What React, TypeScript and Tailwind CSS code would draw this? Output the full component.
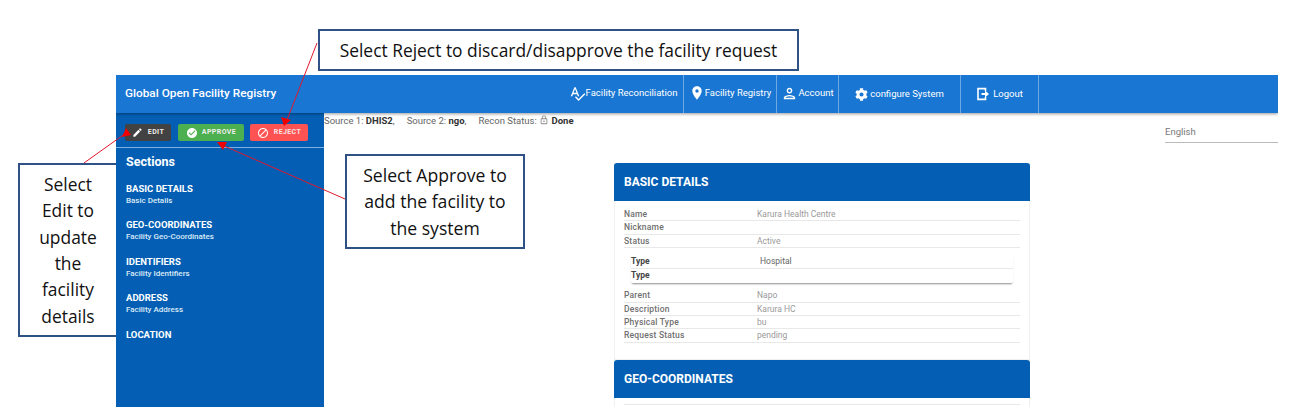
import React from "react";
import {
  MdBlock,
  MdCheckCircle,
  MdEdit,
  MdLockOutline,
  MdOutlinePerson,
  MdRoom,
  MdSpellcheck,
} from "react-icons/md";
import { FaCog } from "react-icons/fa";

const roboto = "font-['Roboto',sans-serif]";

const LogoutIcon = () => (
  <svg viewBox="0 0 14 14" className="h-[14px] w-[14px]" fill="none">
    <path d="M9.5 4V1.6H2V12.4H9.5V10" stroke="currentColor" strokeWidth="1.6" />
    <path d="M5.5 6H9V3.6L13 7L9 10.4V8H5.5Z" fill="currentColor" />
  </svg>
);

const navItems = [
  { label: "Facility Reconciliation", icon: <MdSpellcheck className="text-[17px]" />, width: "w-[121px]", extra: "pb-[2px]" },
  { label: "Facility Registry", icon: <MdRoom className="text-[16px]" />, width: "w-[93px]", extra: "pb-[2px]" },
  { label: "Account", icon: <MdOutlinePerson className="text-[17px]" />, width: "w-[62px]", extra: "pb-[2px]" },
  { label: "configure System", icon: <FaCog className="text-[13px]" />, width: "w-[122px]", extra: "gap-[2px]" },
  { label: "Logout", icon: <LogoutIcon />, width: "w-[78px]", extra: "gap-[3px]" },
];

const sections = [
  { title: "BASIC DETAILS", sub: "Basic Details" },
  { title: "GEO-COORDINATES", sub: "Facility Geo-Coordinates" },
  { title: "IDENTIFIERS", sub: "Facility Identifiers" },
  { title: "ADDRESS", sub: "Facility Address" },
  { title: "LOCATION", sub: "" },
];

const Row = ({ label, value }: { label: string; value?: string }) => (
  <div className="flex h-[13.4px] items-center border-b border-[#e8e8e8] text-[8.5px] leading-none">
    <span className="w-[133px] font-medium tracking-[0.2px] text-[#707070]">{label}</span>
    <span className="text-[#9a9a9a]">{value}</span>
  </div>
);

const Callout = ({ className, children }: { className: string; children: React.ReactNode }) => (
  <div
    className={`absolute flex items-center justify-center border-2 border-[#2f5286] bg-white text-center font-['Open_Sans',sans-serif] text-[#111] ${className}`}
  >
    {children}
  </div>
);

export default function App() {
  return (
    <div className={`relative h-[419px] w-[1308px] overflow-hidden bg-white pl-[116px] pt-[75px] ${roboto}`}>
      <div className="flex h-[332px] w-[1162px] flex-col overflow-hidden">
        <header className="z-10 flex h-[38px] shrink-0 items-center bg-[#1976d2] pl-[9px] text-white shadow-[0_1px_3px_rgba(0,0,0,0.4)]">
          <span className="w-[151px] whitespace-nowrap text-[11.8px] font-medium">Global Open Facility Registry</span>
          <nav className="ml-[287px] flex h-full">
            {navItems.map((item) => (
              <div
                key={item.label}
                className={`flex h-full items-center justify-center border-r border-[#6ea9e4] text-[9.5px] ${item.width} ${item.extra}`}
              >
                {item.icon}
                <span>{item.label}</span>
              </div>
            ))}
          </nav>
        </header>

        <div className="flex min-h-0 flex-1">
          <aside className="w-[208px] shrink-0 bg-[#045fb4] text-white">
            <div className="flex h-[35px] items-start border-b border-[#7fb0de] pl-[9px] pt-[11px]">
              <button className="flex h-[17px] w-[46px] items-center justify-center gap-[5px] rounded-[2px] bg-[#424242] text-[7px] font-bold tracking-[0.4px] text-[#eee]">
                <MdEdit className="text-[11px] text-white" />
                EDIT
              </button>
              <button className="ml-[7px] flex h-[17px] w-[66px] items-center justify-center gap-[4px] rounded-[2px] bg-[#4caf50] text-[7px] font-bold tracking-[0.4px] text-[#eee]">
                <MdCheckCircle className="text-[12px] text-white" />
                APPROVE
              </button>
              <button className="ml-[6px] flex h-[17px] w-[58px] items-center justify-center gap-[5px] rounded-[2px] bg-[#ff5252] text-[7px] font-bold tracking-[0.4px] text-[#f4e4e4]">
                <MdBlock className="text-[12px] text-white" />
                REJECT
              </button>
            </div>
            <div className="pl-[10px] pt-[6px]">
              <h3 className="text-[12.5px] font-bold leading-[16px]">Sections</h3>
              <ul className="mt-[13px] flex flex-col gap-[13px]">
                {sections.map((s) => (
                  <li key={s.title} className="h-[23.4px]">
                    <div className="text-[9.5px] font-bold leading-[12px]">{s.title}</div>
                    <div className="text-[8px] font-medium leading-[11px] text-[#dcebf8]">{s.sub}</div>
                  </li>
                ))}
              </ul>
            </div>
          </aside>

          <main className="relative min-w-0 flex-1">
            <div className="flex items-start justify-between">
              <p className="pt-[2px] text-[9.5px] leading-[11px] text-[#666]">
                Source 1: <b className="font-bold text-[#333]">DHIS2</b>,<span className="ml-[12px]">Source 2:</span>{" "}
                <b className="font-bold text-[#333]">ngo</b>,<span className="ml-[12px]">Recon Status:</span>{" "}
                <MdLockOutline className="inline align-[-1px] text-[10px] text-[#888]" />{" "}
                <b className="font-bold text-[#333]">Done</b>
              </p>
              <div className="mt-[11px] h-[19px] w-[113px] border-b border-[#bbb] text-[9.5px] leading-[16px] text-[#777]">
                English
              </div>
            </div>

            <div className="ml-[290px] mt-[20px] w-[416px]">
              <section className="border border-t-0 border-[#f0f0f0] pb-[16px]">
                <h2 className="-mx-[1px] flex h-[38px] items-center rounded-t-[3px] bg-[#045fb4] pl-[10px] text-[12px] font-bold text-white">
                  BASIC DETAILS
                </h2>
                <div className="px-[9px] pt-[7px]">
                  <Row label="Name" value="Karura Health Centre" />
                  <Row label="Nickname" />
                  <Row label="Status" value="Active" />
                  <div className="mx-[7px] mb-[6px] mt-[7px] rounded-b-[2px] pb-[1px] shadow-[0_2px_2px_-1px_rgba(0,0,0,0.45)]">
                    <div className="flex h-[14px] items-center border-b border-[#e8e8e8] text-[8.5px] leading-none">
                      <span className="w-[129px] font-bold text-[#444]">Type</span>
                      <span className="text-[#666]">Hospital</span>
                    </div>
                    <div className="flex h-[13px] items-center text-[8.5px] font-bold leading-none text-[#444]">Type</div>
                  </div>
                  <Row label="Parent" value="Napo" />
                  <Row label="Description" value="Karura HC" />
                  <Row label="Physical Type" value="bu" />
                  <Row label="Request Status" value="pending" />
                </div>
              </section>
              <section className="border border-t-0 border-[#f0f0f0] pb-[20px]">
                <h2 className="-mx-[1px] flex h-[38px] items-center rounded-t-[3px] bg-[#045fb4] pl-[10px] text-[12px] font-bold text-white">
                  GEO-COORDINATES
                </h2>
                <div className="mx-[9px] mt-[6px] border-b border-[#e8e8e8]" />
              </section>
            </div>
          </main>
        </div>
      </div>

      <Callout className="left-[318px] top-[29px] h-[42px] w-[481px] text-[17.4px]">Select Reject to discard/disapprove the facility request</Callout>
      <Callout className="left-[18px] top-[163px] h-[174px] w-[98px] border-r-0 text-[17.4px] leading-[26.3px]">
        <span>
          Select
          <br />
          Edit to
          <br />
          update
          <br />
          the
          <br />
          facility
          <br />
          details
        </span>
      </Callout>
      <Callout className="left-[345px] top-[154px] h-[95px] w-[180px] text-[17.6px] leading-[26.3px]">
        <span>
          Select Approve to
          <br />
          add the facility to
          <br />
          the system
        </span>
      </Callout>

      {/* red arrows from the callouts to the buttons */}
      <svg className="pointer-events-none absolute left-0 top-0 z-20" width="1308" height="419" fill="none">
        <g stroke="#e0182d" strokeWidth="1">
          <line x1="317" y1="43" x2="287" y2="120" />
          <line x1="84" y1="163" x2="126" y2="133" />
          <line x1="345" y1="199" x2="222" y2="145" />
        </g>
        <g fill="#f00000">
          <polygon points="284,126 281,117 291,120" />
          <polygon points="122,137 126,128 131,135" />
          <polygon points="217,142 227,142 223,150" />
        </g>
      </svg>
    </div>
  );
}
